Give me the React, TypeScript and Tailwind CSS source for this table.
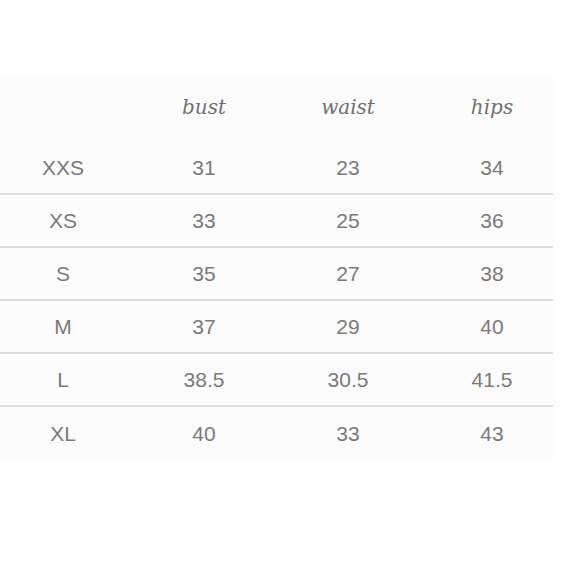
import React from "react";

const rows: [string, string, string, string][] = [
  ["XXS", "31", "23", "34"],
  ["XS", "33", "25", "36"],
  ["S", "35", "27", "38"],
  ["M", "37", "29", "40"],
  ["L", "38.5", "30.5", "41.5"],
  ["XL", "40", "33", "43"],
];

export default function App() {
  return (
    <div className="w-[580px] h-[580px] bg-white pt-[75px]">
      <div className="w-[553px] bg-[#fcfcfc] pb-[0px]">
        <div
          className="grid grid-cols-[126px_156px_132px_139px] h-[67px] items-center text-[#707070] text-[20px] italic"
          style={{ fontFamily: '"DejaVu Serif", serif' }}
        >
          <div />
          <div className="text-center pb-[3px]">bust</div>
          <div className="text-center pb-[3px]">waist</div>
          <div className="text-center pl-[17px] pb-[3px]">hips</div>
        </div>
        {rows.map((r, i) => (
          <div
            key={r[0]}
            className={
              "grid grid-cols-[126px_156px_132px_139px] h-[53px] items-center text-[#7a7a7a] text-[21px] " +
              (i < rows.length - 1 ? "border-b-2 border-[#dedede]" : "")
            }
            style={{ fontFamily: '"Liberation Sans", Arial, sans-serif' }}
          >
            <div className="text-center pt-[1px]">{r[0]}</div>
            <div className="text-center pt-[1px]">{r[1]}</div>
            <div className="text-center pt-[1px]">{r[2]}</div>
            <div className="text-center pl-[17px] pt-[1px]">{r[3]}</div>
          </div>
        ))}
      </div>
    </div>
  );
}
